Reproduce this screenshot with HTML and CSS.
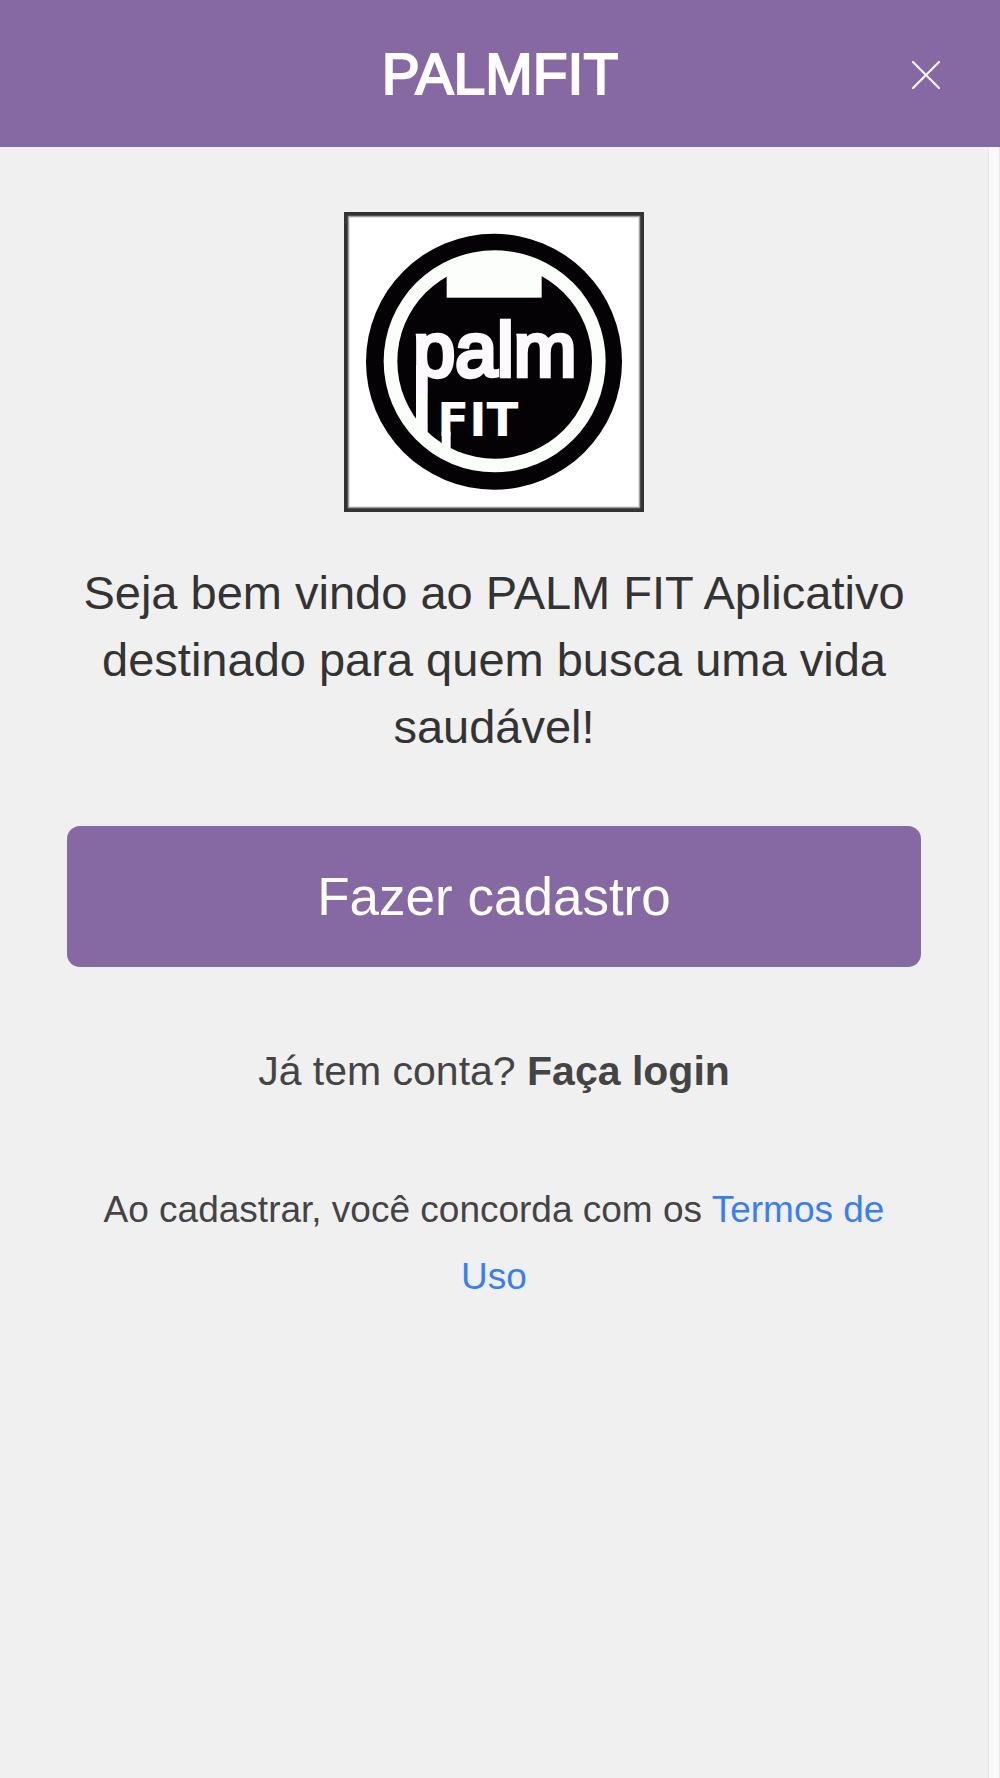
FILE: index.html
```html
<!DOCTYPE html>
<html lang="pt-BR">
<head>
	<meta charset="utf-8">
	<meta name="viewport" content="width=device-width, initial-scale=1">
	<title>PALMFIT</title>
	<link rel="stylesheet" href="styles.css">
</head>
<body>
	<header class="topbar">
		<h1 class="title">PALMFIT</h1>
		<button type="button" class="close" aria-label="Fechar">
			<svg width="28" height="28" viewBox="0 0 28 28">
				<path d="M1 1L27 27M27 1L1 27" stroke="#fff" stroke-width="2" stroke-linecap="round"/>
			</svg>
		</button>
	</header>

	<div class="page">
		<main class="content">
			<svg class="logo" viewBox="27 21 900 900" role="img" aria-label="Palm Fit">
				<!-- frame -->
				<rect x="27" y="21" width="900" height="900" fill="#343234"/>
				<rect x="38" y="32" width="878" height="878" fill="#8a888a"/>
				<rect x="41" y="35" width="872" height="872" fill="#d8d6d8"/>
				<rect x="44" y="38" width="866" height="866" fill="#fff"/>
				<!-- rings -->
				<circle cx="477" cy="470" r="384" fill="#040204"/>
				<circle cx="479" cy="469" r="333" fill="#fcfefc"/>
				<circle cx="479" cy="469" r="292" fill="#040204"/>
				<rect x="335" y="175" width="285" height="103" fill="#fcfefc"/>
				<!-- stems running into the ring -->
				<rect x="243" y="480" width="35" height="215" fill="#fcfefc"/>
				<rect x="320" y="680" width="27" height="65" fill="#fcfefc"/>
				<text class="logo-palm" x="235" y="512">palm</text>
				<text class="logo-fit" x="307" y="692">FIT</text>
			</svg>

			<p class="welcome">Seja bem vindo ao PALM FIT Aplicativo destinado para quem busca uma vida saudável!</p>

			<button type="button" class="signup">Fazer cadastro</button>

			<p class="login">Já tem conta? <a href="#login">Faça login</a></p>

			<p class="terms">Ao cadastrar, você concorda com os <a href="#termos">Termos de Uso</a></p>
		</main>
		<div class="track"></div>
	</div>
</body>
</html>
```

FILE: styles.css
```css
* {
	box-sizing: border-box;
}

body {
	margin: 0;
	min-height: 100vh;
	display: flex;
	flex-direction: column;
	background-color: #f0f0f0;
	font-family: "Liberation Sans", Arial, sans-serif;
	line-height: 67px;
}

.topbar {
	display: grid;
	grid-template-columns: 1fr auto 1fr;
	align-items: center;
	height: 147px;
	padding: 2px 48px 0;
	background-color: #8669a3;
	color: white;
}

.title {
	grid-column: 2;
	margin: 0;
	font-size: 57px;
	font-weight: normal;
	-webkit-text-stroke: 2px white;
}

.close {
	justify-self: end;
	display: flex;
	padding: 12px;
	border: 0;
	background: none;
	cursor: pointer;
}

.page {
	flex: 1;
	display: flex;
}

.content {
	flex: 1;
	display: flex;
	flex-direction: column;
	align-items: center;
	padding: 65px 67px;
	text-align: center;
}

.track {
	width: 12px;
	background-color: #fafafa;
	border-left: 1px solid #e8e8e8;
	border-right: 1px solid #e8e8e8;
}

.logo {
	width: 300px;
	height: 300px;
	margin-bottom: 47px;
}

.logo-palm {
	font-size: 226px;
	fill: #fcfafc;
	stroke: #fcfafc;
	stroke-width: 13px;
}

.logo-fit {
	font-family: "DejaVu Sans", sans-serif;
	font-size: 140px;
	font-weight: bold;
	fill: #fcfefc;
}

.welcome {
	margin: 0 0 66px;
	font-size: 47px;
	color: #333;
}

.signup {
	width: 100%;
	height: 141px;
	margin-bottom: 71px;
	border: 0;
	border-radius: 13px;
	background-color: #8669a3;
	color: white;
	font-family: inherit;
	font-size: 53px;
	cursor: pointer;
}

.login {
	margin: 0 0 71px;
	font-size: 41px;
	color: #444;
}

.login a {
	color: #444;
	font-weight: bold;
	text-decoration: none;
}

.terms {
	margin: 0;
	font-size: 37px;
	color: #444;
}

.terms a {
	color: #387ef5;
	text-decoration: none;
}
```
